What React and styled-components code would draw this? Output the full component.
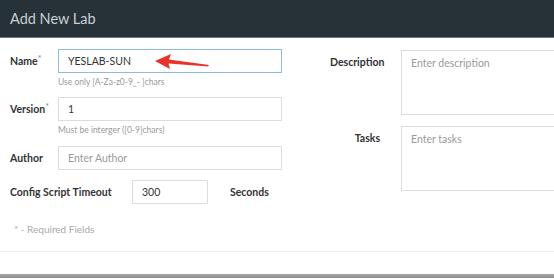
import React from 'react';
import styled, { createGlobalStyle } from 'styled-components';

const GlobalStyle = createGlobalStyle`
    html, body {
        margin: 0;
        padding: 0;
        background: #ffffff;
        overflow: hidden;
    }
    body {
        font-family: Lato, "Open Sans", sans-serif;
    }
`;

const Modal = styled.div`
    width: 554px;
    height: 278px;
    display: flex;
    flex-direction: column;
    background: #fff;
    overflow: hidden;
`;

const Header = styled.header`
    height: 37px;
    flex-shrink: 0;
    display: flex;
    align-items: center;
    padding-left: 10px;
    background: #273238;
    border-bottom: 1px solid #6d787d;
    color: #c9d0d4;
    font-size: 14.5px;
`;

const Body = styled.div`
    height: 214px;
    flex-shrink: 0;
    display: flex;
    padding: 11px 0 0 10px;
    box-sizing: border-box;
    border-bottom: 1px solid #eeeeee;
`;

const LeftCol = styled.div`
    width: 272px;
    display: flex;
    flex-direction: column;
`;

const RightCol = styled.div`
    margin-left: 48px;
    display: flex;
    flex-direction: column;
    gap: 11px;
    padding-top: 1px;
`;

const FieldRow = styled.div`
    display: grid;
    grid-template-columns: 48px 224px;
    align-items: center;
    margin-bottom: ${p => p.$gap || 0}px;
`;

const Label = styled.label`
    font-size: 10.5px;
    font-weight: 700;
    color: #333;
    white-space: nowrap;

    sup {
        font-weight: 400;
        color: #888;
        font-size: 9px;
        vertical-align: top;
        position: relative;
        top: -2px;
    }
`;

const InputWrap = styled.div`
    position: relative;
`;

const Input = styled.input`
    box-sizing: border-box;
    width: ${p => p.$width || 224}px;
    height: 24px;
    border: 1px solid ${p => (p.$focus ? '#8fbcd9' : '#dcdcdc')};
    border-radius: 0;
    padding: 0 9px;
    font-family: inherit;
    font-size: 10.5px;
    color: #333;
    outline: none;
    background: #fff;

    &::placeholder {
        color: #9a9a9a;
    }
`;

const Hint = styled.div`
    margin: 3px 0 0 48px;
    height: 13px;
    line-height: 13px;
    font-size: 8.5px;
    color: #9a9a9a;
`;

const Block = styled.div`
    margin-bottom: ${p => p.$gap}px;
`;

const TimeoutRow = styled.div`
    display: flex;
    align-items: center;
`;

const TimeoutLabel = styled(Label)`
    width: 122px;
`;

const Unit = styled(Label)`
    margin-left: 22px;
`;

const Required = styled.div`
    margin: 19px 0 0 4px;
    font-size: 10px;
    color: #a9a9a9;
`;

const AreaRow = styled.div`
    display: flex;
    align-items: flex-start;
`;

const AreaLabel = styled(Label)`
    width: 50px;
    text-align: right;
    margin-top: 6px;
    margin-right: 21px;
`;

const TextArea = styled.textarea`
    box-sizing: border-box;
    width: 200px;
    height: 65px;
    border: 1px solid #dcdcdc;
    padding: 6px 9px;
    font-family: inherit;
    font-size: 10.5px;
    resize: none;
    outline: none;

    &::placeholder {
        color: #9a9a9a;
    }
`;

const Arrow = styled.svg`
    position: absolute;
    left: 97px;
    top: 5px;
    pointer-events: none;
`;

const Footer = styled.div`
    flex: 1;
    display: flex;
    flex-direction: column;
    justify-content: flex-end;
`;

const BottomEdge = styled.div`
    height: 4px;
    background: linear-gradient(#a8a8a8, #8e8e8e);
`;

const App = () => {
    return (
        <Modal>
            <GlobalStyle />
            <Header>Add New Lab</Header>
            <Body>
                <LeftCol>
                    <Block $gap={8}>
                        <FieldRow>
                            <Label>Name<sup>*</sup></Label>
                            <InputWrap>
                                <Input $focus defaultValue="YESLAB-SUN" />
                                <Arrow width="56" height="16" viewBox="0 0 56 16">
                                    <polygon points="0,7 16,0 14,5.5 54,11 53,12.5 13.5,9.5 15,15" fill="#e8322a" />
                                </Arrow>
                            </InputWrap>
                        </FieldRow>
                        <Hint>Use only [A-Za-z0-9_- ]chars</Hint>
                    </Block>
                    <Block $gap={9}>
                        <FieldRow>
                            <Label>Version<sup>*</sup></Label>
                            <Input defaultValue="1" />
                        </FieldRow>
                        <Hint>Must be interger ([0-9]chars)</Hint>
                    </Block>
                    <FieldRow $gap={10}>
                        <Label>Author</Label>
                        <Input placeholder="Enter Author" />
                    </FieldRow>
                    <TimeoutRow>
                        <TimeoutLabel>Config Script Timeout</TimeoutLabel>
                        <Input $width={76} defaultValue="300" />
                        <Unit>Seconds</Unit>
                    </TimeoutRow>
                    <Required>* - Required Fields</Required>
                </LeftCol>
                <RightCol>
                    <AreaRow>
                        <AreaLabel>Description</AreaLabel>
                        <TextArea placeholder="Enter description" />
                    </AreaRow>
                    <AreaRow>
                        <AreaLabel>Tasks</AreaLabel>
                        <TextArea placeholder="Enter tasks" />
                    </AreaRow>
                </RightCol>
            </Body>
            <Footer>
                <BottomEdge />
            </Footer>
        </Modal>
    );
};

export default App;
